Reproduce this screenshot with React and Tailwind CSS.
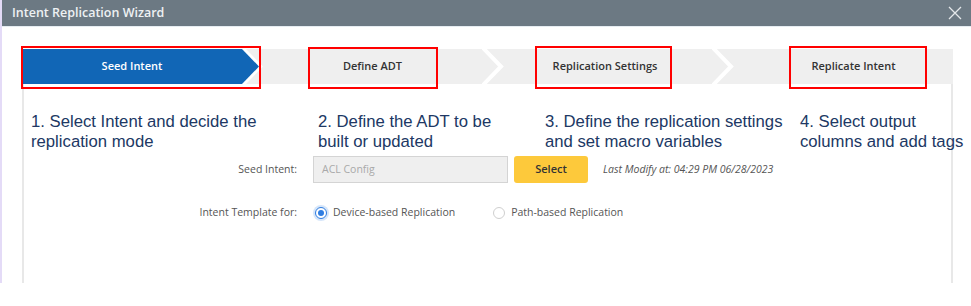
const ui = { fontFamily: '"Open Sans", "Noto Sans", sans-serif' }
const note = { fontFamily: '"Liberation Sans", Arial, sans-serif' }

const Chevron = () => (
  <svg width="22" height="35" viewBox="0 0 22 35" className="shrink-0">
    <polyline points="1,-1 19,17.5 1,36" fill="none" stroke="#ffffff" strokeWidth="4" />
  </svg>
)

const Stepper = () => (
  <div className="flex h-[35px] bg-[#efefef] text-[11px] font-semibold" style={ui}>
    {/* active step */}
    <div className="w-[241px] shrink-0 bg-white [clip-path:polygon(0_0,224px_0,241px_50%,224px_100%,0_100%)]">
      <div className="flex h-full w-[237px] items-center justify-center bg-[#1166b6] pr-[17px] text-white [clip-path:polygon(0_0,220px_0,237px_50%,220px_100%,0_100%)]">
        Seed Intent
      </div>
    </div>
    <div className="flex w-[219px] shrink-0 items-center justify-center text-[#333]">Define ADT</div>
    <Chevron />
    <div className="flex w-[208px] shrink-0 items-center justify-center pr-[6px] text-[#333]">Replication Settings</div>
    <Chevron />
    <div className="flex flex-1 items-center justify-center pl-[20px] text-[#333]">Replicate Intent</div>
  </div>
)

const Radio = ({ checked, label }) => (
  <label className="flex items-center gap-[6px]">
    {checked ? (
      <span className="flex h-[12px] w-[12px] items-center justify-center rounded-full border border-[#2f7de1] bg-white shadow-[0_0_0_2px_#d6e6fa]">
        <span className="h-[6px] w-[6px] rounded-full bg-[#2f7de1]" />
      </span>
    ) : (
      <span className="h-[12px] w-[12px] rounded-full border border-[#cfcfcf] bg-white" />
    )}
    <span>{label}</span>
  </label>
)

const redBoxes = [
  'left-[21px] top-[46px] w-[240px] h-[43px]',
  'left-[308px] top-[47px] w-[130px] h-[42px]',
  'left-[535px] top-[46px] w-[137px] h-[43px]',
  'left-[789px] top-[46px] w-[138px] h-[43px]',
]

export default function App() {
  return (
    <div className="relative h-[306px] w-[971px] overflow-hidden bg-white">
      <div className="flex h-[283px] flex-col border-l-2 border-[#e4dbf7]">
        {/* Header */}
        <div className="flex h-[27px] shrink-0 items-center justify-between border-b border-[#e6edf2] bg-[#6c7983] pl-[10px] pr-[9px]">
          <span className="text-[12.5px] font-semibold text-[#eef1f3]" style={ui}>
            Intent Replication Wizard
          </span>
          <svg width="14" height="14" viewBox="0 0 14 14">
            <path d="M1 1 L13 13 M13 1 L1 13" stroke="#e4e8ea" strokeWidth="1.3" fill="none" />
          </svg>
        </div>

        {/* Body */}
        <div className="flex flex-1 flex-col pl-[20px] pr-[18px] pt-[22px]">
          <Stepper />
          <div className="flex-1 border-x-2 border-[#e8e8e8]">
            <div
              className="mt-[28px] grid grid-cols-[287px_227px_255px_auto] pl-[7px] text-[16.7px] leading-[20px] text-[#203864] whitespace-nowrap"
              style={note}
            >
              <div>1. Select Intent and decide the<br />replication mode</div>
              <div>2. Define the ADT to be<br />built or updated</div>
              <div>3. Define the replication settings<br />and set macro variables</div>
              <div>4. Select output<br />columns and add tags</div>
            </div>

            <div className="text-[10.5px] text-[#555]" style={ui}>
              <div className="mt-[4px] flex h-[27px] items-center">
                <span className="w-[273px] text-right">Seed Intent:</span>
                <div className="ml-[16px] flex h-full w-[195px] items-center border border-[#d4d4d4] bg-[#efefef] pl-[8px] text-[#a9a9a9]">
                  ACL Config
                </div>
                <button className="ml-[6px] h-full w-[74px] rounded-[3px] bg-[#fdc93b] text-[11px] font-semibold text-[#333]">
                  Select
                </button>
                <span className="ml-[15px] text-[10.5px] italic text-[#555]">Last Modify at: 04:29 PM 06/28/2023</span>
              </div>

              <div className="mt-[23px] flex h-[14px] items-center">
                <span className="w-[273px] text-right">Intent Template for:</span>
                <div className="ml-[18px] flex items-center gap-[38px]">
                  <Radio checked label="Device-based Replication" />
                  <Radio label="Path-based Replication" />
                </div>
              </div>
            </div>
          </div>
        </div>
      </div>

      {/* annotation boxes */}
      {redBoxes.map((c) => (
        <div key={c} className={`pointer-events-none absolute border-2 border-[#ff0000] ${c}`} />
      ))}
    </div>
  )
}
